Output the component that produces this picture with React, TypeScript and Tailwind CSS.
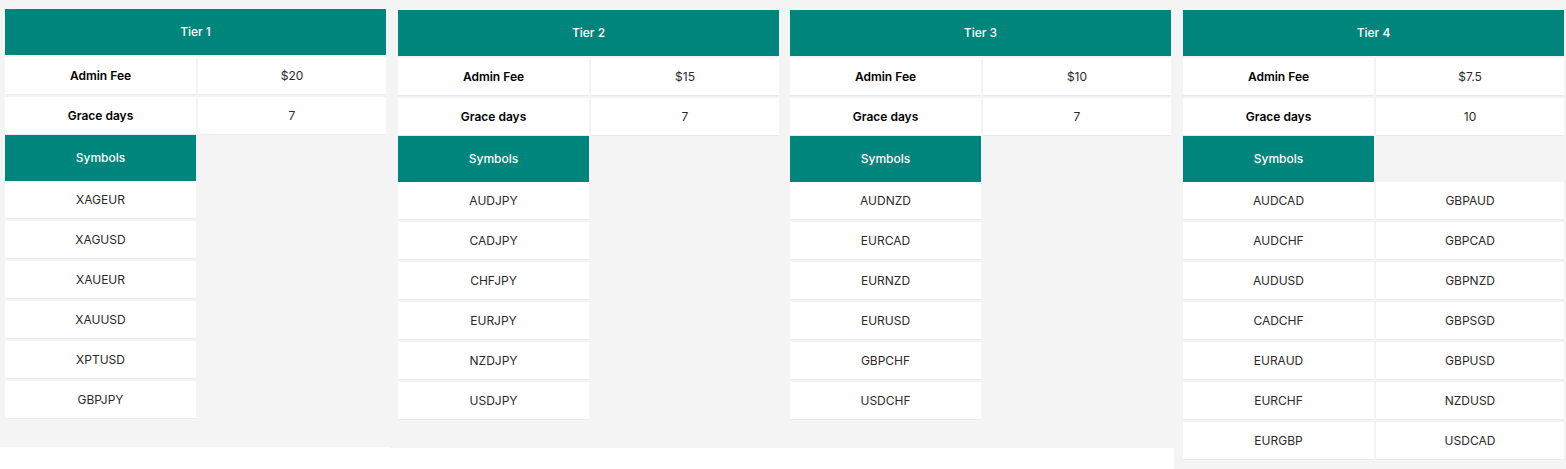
const tiers = [
  {
    name: "Tier 1",
    fee: "$20",
    grace: "7",
    box: "w-[390px] pt-[9px] pl-[5px] pr-[4px]",
    symbols: [["XAGEUR"], ["XAGUSD"], ["XAUEUR"], ["XAUUSD"], ["XPTUSD"], ["GBPJPY"]],
  },
  {
    name: "Tier 2",
    fee: "$15",
    grace: "7",
    box: "w-[392px] pt-[10px] pl-[8px] pr-[3px]",
    symbols: [["AUDJPY"], ["CADJPY"], ["CHFJPY"], ["EURJPY"], ["NZDJPY"], ["USDJPY"]],
  },
  {
    name: "Tier 3",
    fee: "$10",
    grace: "7",
    box: "w-[392px] pt-[10px] pl-[8px] pr-[3px]",
    symbols: [["AUDNZD"], ["EURCAD"], ["EURNZD"], ["EURUSD"], ["GBPCHF"], ["USDCHF"]],
  },
  {
    name: "Tier 4",
    fee: "$7.5",
    grace: "10",
    box: "w-[392px] pt-[10px] pl-[9px] pr-[2px]",
    symbols: [
      ["AUDCAD", "GBPAUD"],
      ["AUDCHF", "GBPCAD"],
      ["AUDUSD", "GBPNZD"],
      ["CADCHF", "GBPSGD"],
      ["EURAUD", "GBPUSD"],
      ["EURCHF", "NZDUSD"],
      ["EURGBP", "USDCAD"],
    ],
  },
]

function Cell({ children, bold }: { children?: React.ReactNode; bold?: boolean }) {
  return (
    <div
      className={
        bold
          ? "h-[38px] bg-white border-b border-[#ebebeb] flex items-center justify-center text-[12px] font-semibold text-black"
          : "h-[38px] bg-white border-b border-[#ebebeb] flex items-center justify-center text-[12px] text-[#2a2a2a]"
      }
    >
      {children}
    </div>
  )
}

function TierPanel({ tier }: { tier: (typeof tiers)[number] }) {
  return (
    <div className={`shrink-0 bg-[#f4f4f4] pb-[28px] ${tier.box}`}>
      <div className="h-[46px] bg-[#00857d] text-white text-[12px] font-medium flex items-center justify-center">
        {tier.name}
      </div>
      <div className="mt-[2px] grid grid-cols-[191px_1fr] gap-x-[2px]">
        <Cell bold>Admin Fee</Cell>
        <Cell>{tier.fee}</Cell>
      </div>
      <div className="mt-[2px] grid grid-cols-[191px_1fr] gap-x-[2px]">
        <Cell bold>Grace days</Cell>
        <Cell>{tier.grace}</Cell>
      </div>
      <div className="grid grid-cols-[191px_1fr] gap-x-[2px]">
        <div className="h-[46px] bg-[#00857d] text-white text-[12px] font-medium flex items-center justify-center">
          Symbols
        </div>
      </div>
      <div className="flex flex-col gap-[2px]">
        {tier.symbols.map((row, i) => (
          <div key={i} className="grid grid-cols-[191px_1fr] gap-x-[2px]">
            {row.map((s) => (
              <Cell key={s}>{s}</Cell>
            ))}
          </div>
        ))}
      </div>
    </div>
  )
}

export default function App() {
  return (
    <div className="w-[1566px] h-[469px] overflow-hidden bg-white font-['Inter',sans-serif]">
      <div className="flex items-start">
        {tiers.map((t) => (
          <TierPanel key={t.name} tier={t} />
        ))}
      </div>
    </div>
  )
}
